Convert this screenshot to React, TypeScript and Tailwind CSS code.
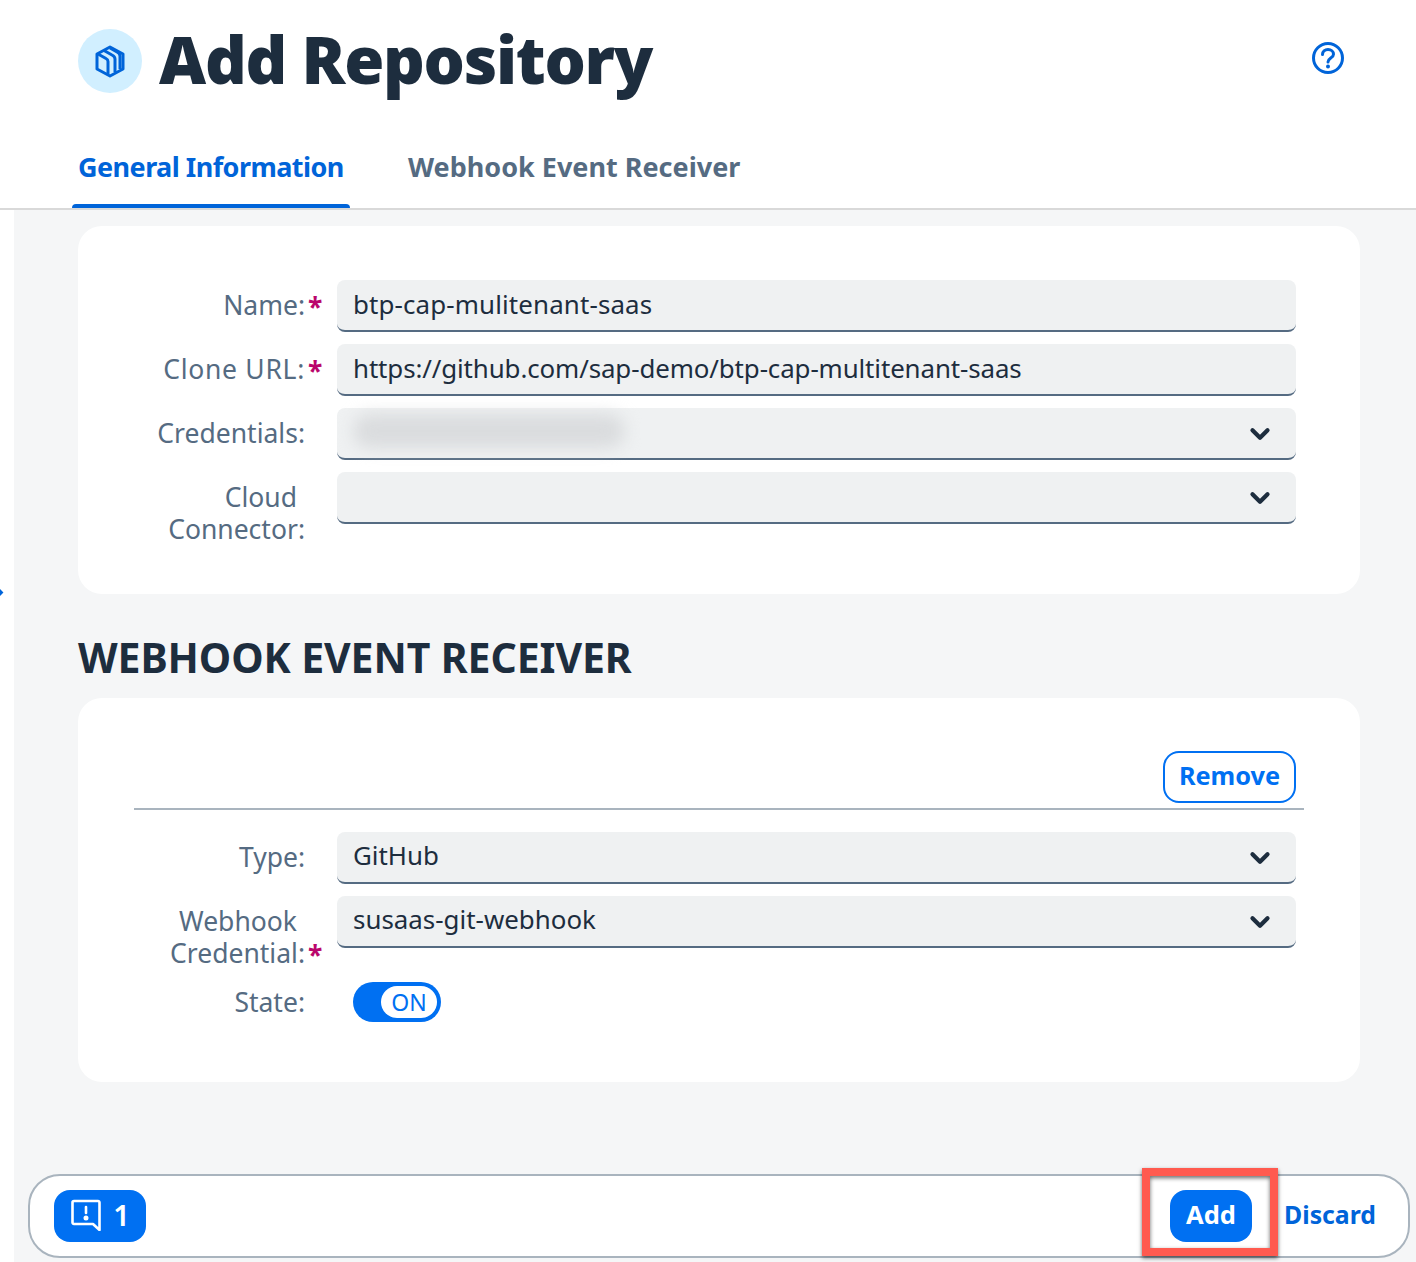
import type { ReactNode } from "react";
import { ChevronDown } from "lucide-react";

const font = "font-['Noto_Sans',sans-serif]";

function Label({ lines, required, textClass }: { lines: string[]; required?: boolean; textClass?: string }) {
  return (
    <div className="w-[259px] shrink-0 pt-[9px] text-right text-[26.5px] leading-[32px] text-[#556b82]">
      {lines.map((l, i) => (
        <div key={l} className="flex justify-end">
          <span className={i < lines.length - 1 ? "pr-[8px]" : textClass}>{l}</span>
          {i === lines.length - 1 && (
            <span className="w-[32px] shrink-0 pl-[3px] text-left font-bold">
              {required ? <span className="relative top-[2px] text-[#ba066c]">*</span> : null}
            </span>
          )}
          {i < lines.length - 1 && <span className="w-[32px] shrink-0" />}
        </div>
      ))}
    </div>
  );
}

function Field({
  value,
  select,
  blurred,
  textClass,
}: {
  value?: string;
  select?: boolean;
  blurred?: boolean;
  textClass?: string;
}) {
  return (
    <div className="relative flex h-[52px] w-[959px] items-center justify-between rounded-[8px] border-b-2 border-[#556b82] bg-[#eff1f2] px-[16px] pb-[3px] text-[25.9px] text-[#1d2d3e]">
      <span className={textClass}>{value}</span>
      {blurred && (
        <span className="absolute left-[16px] top-[6px] h-[34px] w-[272px] rounded-full bg-[#dadcde] blur-[8px]" />
      )}
      {select && (
        <ChevronDown size={30} strokeWidth={3.4} className="absolute right-[21px] top-[11px] text-[#1d2d3e]" />
      )}
    </div>
  );
}

function Row({
  lines,
  required,
  labelClass,
  className,
  children,
}: {
  lines: string[];
  required?: boolean;
  labelClass?: string;
  className?: string;
  children: ReactNode;
}) {
  return (
    <div className={`flex items-start ${className ?? ""}`}>
      <Label lines={lines} required={required} textClass={labelClass} />
      {children}
    </div>
  );
}

export default function App() {
  return (
    <div className={`${font} flex h-[1262px] w-[1416px] flex-col overflow-hidden bg-white`}>
      <header className="h-[210px] shrink-0 border-b-2 border-[#d9d9d9] bg-white">
        <div className="flex h-[122px] items-center pl-[78px] pr-[71px]">
          <div className="flex h-[64px] w-[64px] items-center justify-center rounded-full bg-[#d1efff]">
            <svg width="30" height="33" viewBox="0 0 30 33" fill="none" stroke="#0064d9" strokeWidth="3" strokeLinejoin="round">
              <path d="M15 2 28 9v15l-13 7-13-7V9z" />
              <path d="M3 9l8 4.500q2 1 2 3V29" />
              <path d="M9 5.500l8 4.500q3 1.500 3 4V27" />
              <path d="M15 3l7 4q3 1.500 3 4v13" />
            </svg>
          </div>
          <h1 className="ml-[17px] -mt-[3px] text-[65px] font-black leading-none tracking-[-1.3px] whitespace-nowrap text-[#1d2d3e]">
            Add Repository
          </h1>
          <svg className="ml-auto -mt-[6px]" width="34" height="34" viewBox="0 0 34 34" fill="none">
            <circle cx="17" cy="17" r="14.500" stroke="#0064d9" strokeWidth="3" />
            <path d="M11.500 13.500c0-3 2.400-5 5.500-5s5.500 2 5.500 4.700c0 4-5.500 3.800-5.500 7.800" stroke="#0064d9" strokeWidth="3" strokeLinecap="round" />
            <circle cx="17" cy="25.500" r="2" fill="#0064d9" />
          </svg>
        </div>
        <nav className="flex pl-[72px] text-[27px] font-bold">
          <div className="relative h-[86px] w-[278px] whitespace-nowrap pl-[6px] pt-[29px] leading-[32px] tracking-[-0.55px] text-[#0064d9]">
            General Information
            <span className="absolute bottom-0 left-0 h-[4px] w-full rounded-t-[4px] bg-[#0064d9]" />
          </div>
          <div className="whitespace-nowrap pl-[58px] pt-[29px] leading-[32px] text-[#556b82]">Webhook Event Receiver</div>
        </nav>
      </header>

      <div className="flex min-h-0 flex-1">
        <div className="relative w-[14px] shrink-0 bg-white">
          <span className="absolute left-[-5px] top-[379px] h-[7px] w-[7px] rotate-45 bg-[#0064d9]" />
        </div>
        <main className="flex min-w-0 flex-1 flex-col bg-[#f5f6f7] pl-[64px] pr-[56px] pt-[16px]">
          <section className="flex h-[368px] shrink-0 flex-col gap-[12px] rounded-[24px] bg-white pt-[54px]">
            <Row lines={["Name:"]} required>
              <Field value="btp-cap-mulitenant-saas" textClass="relative top-[1px] tracking-[0.13px]" />
            </Row>
            <Row lines={["Clone URL:"]} required labelClass="tracking-[0.7px]">
              <Field value="https://github.com/sap-demo/btp-cap-multitenant-saas" textClass="relative top-[1px] tracking-[-0.12px]" />
            </Row>
            <Row lines={["Credentials:"]}>
              <Field select blurred />
            </Row>
            <Row lines={["Cloud", "Connector:"]}>
              <Field select />
            </Row>
          </section>

          <h2 className="mt-[39px] h-[48px] text-[41px] font-bold leading-[48px] tracking-[-0.1px] whitespace-nowrap text-[#1d2d3e]">
            WEBHOOK EVENT RECEIVER
          </h2>

          <section className="mt-[17px] h-[384px] shrink-0 rounded-[24px] bg-white pt-[53px]">
            <div className="ml-[56px] mr-[56px] flex h-[59px] justify-end border-b-2 border-[#a9b4be] pr-[8px]">
              <button className="h-[52px] w-[133px] rounded-[16px] border-2 border-[#0070f2] pb-[2px] text-[25.3px] font-bold text-[#0070f2]">
                Remove
              </button>
            </div>
            <div className="mt-[22px] flex flex-col gap-[12px]">
              <Row lines={["Type:"]}>
                <Field value="GitHub" select />
              </Row>
              <Row lines={["Webhook", "Credential:"]} required>
                <Field value="susaas-git-webhook" select />
              </Row>
              <Row lines={["State:"]} className="-mt-[4px]">
                <div className="ml-[16px] mt-[5px] flex h-[40px] w-[88px] items-center justify-end rounded-full bg-[#0070f2] pr-[4px]">
                  <span className="flex h-[32px] w-[56px] items-center justify-center rounded-full bg-white text-[23px] text-[#0070f2]">
                    ON
                  </span>
                </div>
              </Row>
            </div>
          </section>

          <div className="relative ml-[-50px] mr-[-50px] mt-[92px] flex h-[84px] shrink-0 items-center justify-between rounded-[32px] border-2 border-[#a9b4be] bg-white pl-[24px] pr-[32px]">
            <button className="flex h-[52px] w-[92px] items-center justify-center gap-[11px] rounded-[16px] bg-[#0070f2] pb-[2px] text-[29px] font-semibold text-white">
              <svg width="32" height="32" viewBox="0 0 32 32" fill="none" stroke="white" strokeWidth="2.6" strokeLinejoin="round">
                <path d="M4 2h24a1.500 1.500 0 0 1 1.500 1.500V31L23 25H4a1.500 1.500 0 0 1-1.500-1.500v-20A1.500 1.500 0 0 1 4 2z" />
                <path d="M16 8v6" strokeLinecap="round" />
                <circle cx="16" cy="19" r="1.200" fill="white" />
              </svg>
              1
            </button>
            <div className="flex items-center gap-[32px]">
              <button className="h-[52px] w-[82px] rounded-[16px] bg-[#0070f2] pb-[3px] text-[25.5px] font-bold text-white">Add</button>
              <span className="pb-[3px] text-[24.8px] font-bold text-[#0064d9]">Discard</span>
            </div>
            <div className="pointer-events-none absolute right-[130px] top-[-8px] h-[88px] w-[136px] border-[8px] border-[#ff5a4f] shadow-[0_2px_4px_rgba(0,0,0,0.6),inset_0_2px_4px_rgba(0,0,0,0.6)]" />
          </div>
        </main>
      </div>
    </div>
  );
}
